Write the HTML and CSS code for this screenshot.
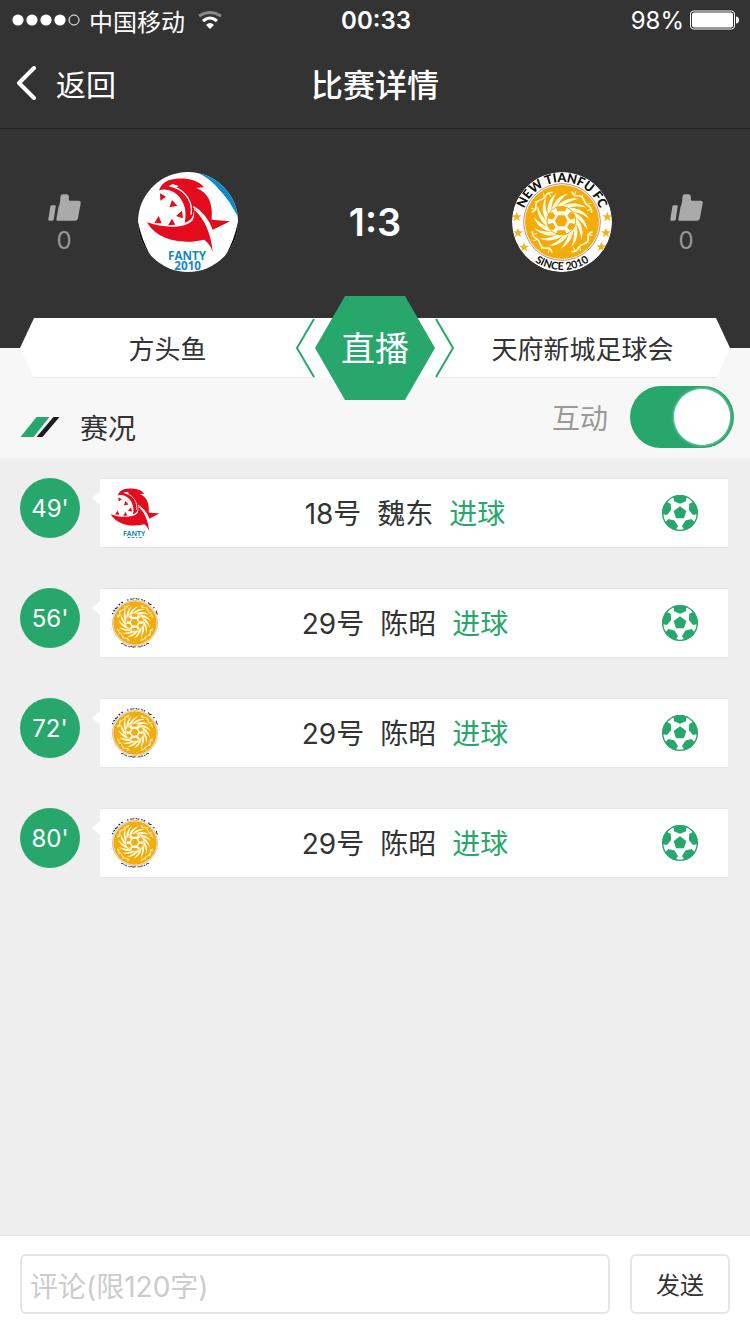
FILE: index.html
```html
<!DOCTYPE html>
<html lang="zh-CN">
<head>
  <meta charset="UTF-8">
  <meta name="viewport" content="width=device-width, initial-scale=1">
  <title>比赛详情</title>
  <link rel="stylesheet" href="styles.css">
</head>
<body>
  <!-- shared icons and club badges -->
  <svg class="sprite" aria-hidden="true">
    <defs>
      <g id="thumb">
        <path d="M66 74h9q3 0 2 3l-6 40q-1 3-4 3H57q-3 0-2-3l6-39q1-4 5-4z"/>
        <path d="M91 48q1-6 7-6h10q8 0 8 8v8q0 3 4 3h25q8 0 6 8l-8 44q-1 7-8 7H83q-5 0-4-5l6-35q5-10 5-18z"/>
      </g>

      <g id="ball">
        <circle r="52" fill="#fff" stroke="#28a76d" stroke-width="4"/>
        <path fill="#28a76d" d="M0-20 19-6 12 16H-12L-19-6z"/>
        <path id="patch" fill="#28a76d" d="M-25-47-19-46-18-35 0-28 18-35 19-46 25-47A53 53 0 0 0-25-47z"/>
        <use href="#patch" transform="rotate(72)"/>
        <use href="#patch" transform="rotate(144)"/>
        <use href="#patch" transform="rotate(216)"/>
        <use href="#patch" transform="rotate(288)"/>
      </g>

      <g id="fanty">
        <g fill="#e30b1c">
          <path d="M87 91C92 76 102 66 118 60C145 52 200 52 222 82L198 84C238 98 249 135 245 179L300 184L247 210C237 182 220 158 192 146C192 168 184 182 164 188C174 150 158 103 118 91C106 88 98 88 87 91z"/>
          <path d="M51 187C95 203 160 208 187 182C193 172 193 160 192 150C217 168 243 214 248 275C243 258 232 245 222 239C165 253 85 246 51 187z"/>
          <path d="M90 100l18 10-17 12zM118 142l8-22 16 17zM138 168l18-16 3 23zM114 196l12-20 10 18zM73 189l13-21 9 22z"/>
        </g>
        <path d="M134 82C168 94 190 128 183 164" fill="none" stroke="#fff" stroke-width="4"/>
        <path d="M190 140C218 156 236 182 247 214" fill="none" stroke="#fff" stroke-width="5"/>
        <path d="M116 79l12-7 18 6-10 7z" fill="#fff"/>
        <text class="fanty-text" x="171" y="300">FANTY</text>
        <text class="fanty-text" x="173" y="331">2010</text>
      </g>

      <path id="top-arc" d="M-120 0A120 120 0 0 1 120 0"/>
      <path id="bottom-arc" d="M-144 0A144 144 0 0 0 144 0"/>
      <path id="star" fill="#ecb51c" d="M0-15 4-5 15-5 6 2 10 13 0 6-10 13-6 2-15-5-4-5z"/>
      <path id="blade" fill="#fffbe0" d="M-14-42C0-60 24-72 52-66C32-62 14-54 2-42z"/>
      <g id="dragon" fill="none" stroke="#fff5c8" stroke-linecap="round">
        <path stroke-width="5" d="M-42-85Q-30-78-22-89T0-93T22-90T42-84"/>
        <path stroke-width="3" d="M-28-81l-8-12M-6-92l-7-8M16-91l6-10M33-87l-3 9"/>
      </g>
      <g id="tianfu">
        <circle r="150" fill="#fff"/>
        <text class="arc-text arc-text-top"><textPath href="#top-arc" startOffset="50%">NEW TIANFU FC</textPath></text>
        <text class="arc-text arc-text-bottom"><textPath href="#bottom-arc" startOffset="50%">SINCE 2010</textPath></text>
        <use href="#star" x="-136" y="-15"/>
        <use href="#star" x="-132" y="33"/>
        <use href="#star" x="-114" y="76"/>
        <use href="#star" x="136" y="-15"/>
        <use href="#star" x="132" y="33"/>
        <use href="#star" x="118" y="75"/>
        <circle r="115" fill="#fff" stroke="#9a5040" stroke-width="2"/>
        <circle r="111" fill="#f2ac0c"/>
        <use href="#dragon" transform="rotate(45)"/>
        <use href="#dragon" transform="rotate(135)"/>
        <use href="#dragon" transform="rotate(225)"/>
        <use href="#dragon" transform="rotate(315)"/>
        <g transform="translate(-2 -4)">
          <use href="#blade"/>
          <use href="#blade" transform="rotate(24)"/>
          <use href="#blade" transform="rotate(48)"/>
          <use href="#blade" transform="rotate(72)"/>
          <use href="#blade" transform="rotate(96)"/>
          <use href="#blade" transform="rotate(120)"/>
          <use href="#blade" transform="rotate(144)"/>
          <use href="#blade" transform="rotate(168)"/>
          <use href="#blade" transform="rotate(192)"/>
          <use href="#blade" transform="rotate(216)"/>
          <use href="#blade" transform="rotate(240)"/>
          <use href="#blade" transform="rotate(264)"/>
          <use href="#blade" transform="rotate(288)"/>
          <use href="#blade" transform="rotate(312)"/>
          <use href="#blade" transform="rotate(336)"/>
          <circle r="43" fill="#fffdf0" stroke="#f2ac0c" stroke-width="3"/>
          <g fill="#f2ac0c">
            <path d="M-10-16H10L19 1 10 17H-10L-19 1z"/>
            <path d="M-16-40Q0-46 16-40L12-28H-12zM-16 40Q0 46 16 40L12 29H-12zM-43-8-38-22-27-26-18-15-27-3zM43-8 38-22 27-26 18-15 27-3zM-42 10-36 24-25 29-17 20-25 7zM42 10 36 24 25 29 17 20 25 7z"/>
          </g>
        </g>
      </g>
    </defs>
  </svg>

  <header class="top">
    <div class="status-bar">
      <div class="status-left">
        <svg class="signal" viewBox="0 0 68 12" aria-hidden="true">
          <circle cx="6" cy="6" r="5.6"/>
          <circle cx="20" cy="6" r="5.6"/>
          <circle cx="34" cy="6" r="5.6"/>
          <circle cx="48" cy="6" r="5.6"/>
          <circle cx="62" cy="6" r="5" fill="none" stroke="#fff"/>
        </svg>
        <span>中国移动</span>
        <svg class="wifi" viewBox="0 0 24 18" fill="none" stroke="#fff" aria-hidden="true">
          <path d="M1 5Q12-2 23 5" stroke="#888" stroke-width="3"/>
          <path d="M5 10Q12 4 19 10" stroke-width="3"/>
          <path d="M8 14Q12 10 16 14L12 18z" fill="#fff" stroke="none"/>
        </svg>
      </div>
      <span class="time">00:33</span>
      <div class="status-right">
        <span>98%</span>
        <svg class="battery" viewBox="0 0 50 20" aria-hidden="true">
          <rect x=".5" y="1" width="44" height="18" rx="3" fill="none" stroke="#fff"/>
          <rect x="2" y="2.500" width="41" height="15" rx="2"/>
          <path d="M46 6.500q3 0 3 3.500t-3 3.500z"/>
        </svg>
      </div>
    </div>

    <nav class="nav-bar">
      <a class="back" href="#">
        <svg viewBox="0 0 20 34" fill="none" stroke="#fff" stroke-width="4" stroke-linecap="round" stroke-linejoin="round" aria-hidden="true">
          <path d="M18 2 3 17 18 32"/>
        </svg>
        返回
      </a>
      <h1>比赛详情</h1>
    </nav>

    <div class="scoreboard">
      <button class="like" type="button" aria-label="支持方头鱼">
        <svg viewBox="54 41 98 80" aria-hidden="true"><use href="#thumb"/></svg>
        <span>0</span>
      </button>
      <svg class="club-logo" viewBox="24 36 300 300" role="img" aria-label="方头鱼">
        <rect x="24" y="36" width="300" height="300" fill="#fff"/>
        <path d="M196 36Q232 50 256 76T298 126L324 170V36z" fill="#0d8ccb"/>
        <path d="M24 186Q36 242 60 284L24 300zM324 186Q312 242 288 284L324 300z" fill="#000"/>
        <use href="#fanty"/>
      </svg>
      <strong class="score">1:3</strong>
      <svg class="club-logo" viewBox="-150 -150 300 300" role="img" aria-label="天府新城足球会"><use href="#tianfu"/></svg>
      <button class="like" type="button" aria-label="支持天府新城足球会">
        <svg viewBox="54 41 98 80" aria-hidden="true"><use href="#thumb"/></svg>
        <span>0</span>
      </button>
    </div>
  </header>

  <div class="tabs">
    <button class="team team-home" type="button">方头鱼</button>
    <div class="tabs-middle">
      <button class="live" type="button">
        <svg viewBox="0 0 160 104" aria-hidden="true">
          <path d="M50 0H110L140 52 110 104H50L20 52z" fill="#28a76d"/>
          <path d="M19 23 2 52 19 81M141 23 158 52 141 81" fill="none" stroke="#28a76d" stroke-width="2"/>
        </svg>
        <span>直播</span>
      </button>
    </div>
    <button class="team team-away" type="button">天府新城足球会</button>
  </div>

  <div class="section-head">
    <h2>
      <svg viewBox="0 0 39 20" aria-hidden="true">
        <path d="M16 0H29L13 20H0z" fill="#28a76d"/>
        <path d="M33 0H39L22 20H16z" fill="#1c1c20"/>
      </svg>
      赛况
    </h2>
    <label class="interact">
      互动
      <input class="switch" type="checkbox" checked>
    </label>
  </div>

  <main>
    <ul class="events">
      <li>
        <span class="minute">49'</span>
        <div class="card">
          <svg class="card-logo" viewBox="47 53 256 256" aria-hidden="true"><use href="#fanty"/></svg>
          <p><span>18号</span><span>魏东</span><span class="goal">进球</span></p>
          <svg class="ball" viewBox="-54 -54 108 108" aria-hidden="true"><use href="#ball"/></svg>
        </div>
      </li>
      <li>
        <span class="minute">56'</span>
        <div class="card">
          <svg class="card-logo round" viewBox="-128 -128 256 256" aria-hidden="true"><use href="#tianfu"/></svg>
          <p><span>29号</span><span>陈昭</span><span class="goal">进球</span></p>
          <svg class="ball" viewBox="-54 -54 108 108" aria-hidden="true"><use href="#ball"/></svg>
        </div>
      </li>
      <li>
        <span class="minute">72'</span>
        <div class="card">
          <svg class="card-logo round" viewBox="-128 -128 256 256" aria-hidden="true"><use href="#tianfu"/></svg>
          <p><span>29号</span><span>陈昭</span><span class="goal">进球</span></p>
          <svg class="ball" viewBox="-54 -54 108 108" aria-hidden="true"><use href="#ball"/></svg>
        </div>
      </li>
      <li>
        <span class="minute">80'</span>
        <div class="card">
          <svg class="card-logo round" viewBox="-128 -128 256 256" aria-hidden="true"><use href="#tianfu"/></svg>
          <p><span>29号</span><span>陈昭</span><span class="goal">进球</span></p>
          <svg class="ball" viewBox="-54 -54 108 108" aria-hidden="true"><use href="#ball"/></svg>
        </div>
      </li>
    </ul>
  </main>

  <form class="comment-bar">
    <input type="text" maxlength="120" placeholder="评论(限120字)" aria-label="评论">
    <button type="submit">发送</button>
  </form>
</body>
</html>
```
FILE: styles.css
```css
* {
  box-sizing: border-box;
}
body {
  margin: 0;
  min-height: 100vh;
  display: flex;
  flex-direction: column;
  background: #eee;
  color: #333;
  font-family: Inter, "Noto Sans CJK SC", sans-serif;
  font-size: 28px;
  font-weight: 380;
}
h1, h2, p, ul {
  margin: 0;
  padding: 0;
}
button, input {
  margin: 0;
  font: inherit;
  color: inherit;
}
button {
  padding: 0;
  border: 0;
  background: none;
  cursor: pointer;
}
svg {
  display: block;
}
.sprite {
  position: absolute;
  width: 0;
  height: 0;
}

/* header */
.top {
  background: #333;
  color: #fff;
}
.status-bar {
  display: grid;
  grid-template-columns: 1fr auto 1fr;
  align-items: center;
  height: 40px;
  padding: 0 10px 0 12px;
  font-size: 24px;
}
.status-left, .status-right {
  display: flex;
  align-items: center;
}
.status-left {
  gap: 9px;
}
.status-right {
  justify-content: flex-end;
  gap: 6px;
}
.status-bar svg {
  fill: #fff;
}
.signal {
  width: 68px;
  height: 12px;
}
.status-bar .wifi {
  width: 24px;
  height: 18px;
  margin-left: 4px;
  fill: none;
}
.time {
  font-weight: 600;
}
.battery {
  width: 50px;
  height: 20px;
}
.nav-bar {
  display: grid;
  grid-template-columns: 1fr auto 1fr;
  align-items: center;
  height: 89px;
  padding: 0 16px 2px;
  border-bottom: 1px solid #222;
}
.back {
  display: flex;
  align-items: center;
  gap: 20px;
  color: #fff;
  font-size: 30px;
  text-decoration: none;
}
.back svg {
  width: 20px;
  height: 34px;
}
h1 {
  font-size: 32px;
  font-weight: 500;
}

/* score */
.scoreboard {
  display: grid;
  grid-template-columns: 128px 120px 1fr 120px 128px;
  align-items: center;
  justify-items: center;
  padding: 43px 0 46px;
}
.club-logo {
  width: 100px;
  height: 100px;
  border-radius: 50%;
}
.score {
  font-size: 38px;
  font-weight: 600;
}
.like {
  display: flex;
  flex-direction: column;
  align-items: center;
  gap: 6px;
  padding-top: 5px;
  color: #999;
  font-size: 24px;
  line-height: 28px;
}
.like svg {
  width: 33px;
  height: 27px;
  fill: #aaa;
}
.fanty-text {
  font: 700 35px "Open Sans", sans-serif;
  fill: #1489c4;
  text-anchor: middle;
}
.arc-text {
  font-family: Lato, sans-serif;
  text-anchor: middle;
  fill: #111;
}
.arc-text-top {
  font-size: 38px;
  font-weight: 900;
}
.arc-text-bottom {
  font-size: 32px;
  font-weight: 700;
}

/* team tabs, half over the dark header */
.tabs {
  display: grid;
  grid-template-columns: 1fr 120px 1fr;
  height: 60px;
  padding: 0 20px;
  background: linear-gradient(#333 50%, #f7f7f7 50%);
}
.team {
  padding-bottom: 1px;
  background: #fff;
  border-bottom: 1px solid #e8e8e8;
  font-size: 26px;
}
.team-home {
  clip-path: polygon(14px 0, 100% 0, 100% 100%, 14px 100%, 0 50%);
}
.team-away {
  clip-path: polygon(0 0, calc(100% - 14px) 0, 100% 50%, calc(100% - 14px) 100%, 0 100%);
}
.tabs-middle {
  display: flex;
  align-items: center;
  justify-content: center;
  background: #fff;
}
.live {
  display: grid;
  flex: none;
  place-items: center;
  margin: -22px -20px;
  position: relative;
  z-index: 1;
  color: #fff;
  font-size: 34px;
}
.live svg, .live span {
  grid-area: 1 / 1;
}
.live span {
  padding-bottom: 4px;
}
.live svg {
  width: 160px;
  height: 104px;
}

/* section title */
.section-head {
  display: flex;
  justify-content: space-between;
  align-items: center;
  height: 80px;
  padding: 0 16px 2px 20px;
  background: #f7f7f7;
}
h2 {
  display: flex;
  align-items: center;
  gap: 20px;
  padding-top: 20px;
  font-size: 28px;
  font-weight: 380;
}
h2 svg {
  width: 40px;
  height: 20px;
}
.interact {
  display: flex;
  align-items: center;
  gap: 22px;
  color: #999;
}
.switch {
  appearance: none;
  display: grid;
  align-items: center;
  width: 104px;
  height: 62px;
  padding: 0 4px;
  border-radius: 31px;
  background: #ccc;
}
.switch::before {
  content: "";
  width: 56px;
  height: 56px;
  border-radius: 50%;
  background: #fff;
  box-shadow: 0 0 3px rgba(255,255,255,0.8);
}
.switch:checked {
  background: #28a76d;
  justify-content: end;
}

/* match events */
main {
  flex: 1;
}
.events {
  display: grid;
  gap: 40px;
  padding: 20px 22px 40px 20px;
  list-style: none;
}
.events li {
  display: flex;
  gap: 20px;
}
.minute {
  display: grid;
  flex: none;
  place-items: center;
  width: 60px;
  height: 60px;
  border-radius: 50%;
  background: #28a76d;
  color: #fff;
  font-size: 24px;
  font-weight: 400;
}
.card {
  position: relative;
  flex: 1;
  display: flex;
  align-items: center;
  height: 70px;
  padding: 0 18px 0 10px;
  background: #fff;
  border: solid #e6e6e6;
  border-width: 1px 0;
}
.card::before {
  content: "";
  position: absolute;
  left: -8px;
  top: 12px;
  width: 8px;
  height: 14px;
  background: #fff;
  clip-path: polygon(100% 0, 100% 100%, 0 50%);
}
.card-logo {
  width: 50px;
  height: 50px;
}
.round {
  border-radius: 50%;
}
.card p {
  flex: 1;
  display: flex;
  justify-content: center;
  gap: 16px;
  padding-bottom: 2px;
}
.goal {
  color: #28a76d;
}
.ball {
  width: 36px;
  height: 36px;
  margin: 0 12px;
}

/* comment form */
.comment-bar {
  display: flex;
  gap: 20px;
  padding: 18px 20px 20px;
  background: #fff;
  border-top: 1px solid #e6e6e6;
}
.comment-bar input, .comment-bar button {
  height: 60px;
  border: 2px solid #e6e6e6;
  border-radius: 6px;
  background: #fff;
}
.comment-bar input {
  flex: 1;
  min-width: 0;
  padding: 6px 8px 0;
}
.comment-bar input::placeholder {
  color: #ccc;
}
.comment-bar button {
  width: 100px;
  padding-bottom: 2px;
  font-size: 24px;
}
```
